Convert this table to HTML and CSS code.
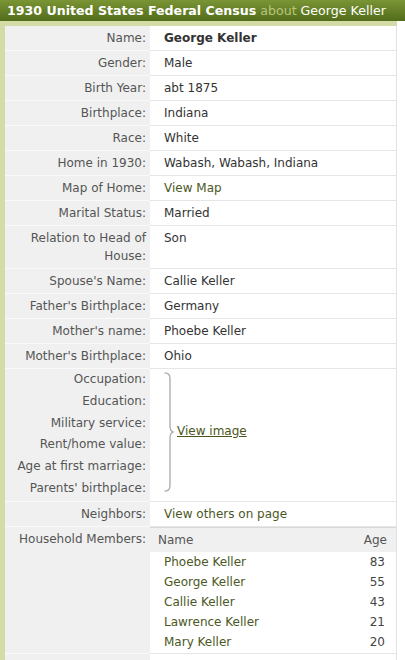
FILE: index.html
```html
<!DOCTYPE html>
<html lang="en">
<head>
<meta charset="utf-8">
<title>1930 United States Federal Census about George Keller</title>
<link rel="stylesheet" href="styles.css">
</head>
<body>
<h1 class="title"><b>1930 United States Federal Census</b> <span class="about">about</span> George Keller</h1>
<div class="frame">
  <table class="rec">
    <colgroup><col class="c-label"><col class="c-value"></colgroup>
    <tbody>
      <tr><td class="l">Name:</td><td class="v"><strong>George Keller</strong></td></tr>
      <tr><td class="l">Gender:</td><td class="v">Male</td></tr>
      <tr><td class="l">Birth Year:</td><td class="v">abt 1875</td></tr>
      <tr><td class="l">Birthplace:</td><td class="v">Indiana</td></tr>
      <tr><td class="l">Race:</td><td class="v">White</td></tr>
      <tr><td class="l">Home in 1930:</td><td class="v">Wabash, Wabash, Indiana</td></tr>
      <tr><td class="l">Map of Home:</td><td class="v"><a class="lnk" href="#">View Map</a></td></tr>
      <tr><td class="l">Marital Status:</td><td class="v">Married</td></tr>
      <tr><td class="l">Relation to Head of House:</td><td class="v">Son</td></tr>
      <tr><td class="l">Spouse's Name:</td><td class="v">Callie Keller</td></tr>
      <tr><td class="l">Father's Birthplace:</td><td class="v">Germany</td></tr>
      <tr><td class="l">Mother's name:</td><td class="v">Phoebe Keller</td></tr>
      <tr><td class="l">Mother's Birthplace:</td><td class="v">Ohio</td></tr>
      <tr>
        <td class="l multi">Occupation:<br>Education:<br>Military service:<br>Rent/home value:<br>Age at first marriage:<br>Parents' birthplace:</td>
        <td class="v img-cell">
          <div class="brace-wrap">
            <svg class="brace" width="10" height="120" viewBox="0 0 10 120" aria-hidden="true">
              <path d="M0.5 0.8 Q6 0.8 6 6.5 L6 54 Q6 59 9.2 60 Q6 61 6 66 L6 113.5 Q6 119.2 0.5 119.2" fill="none" stroke="#a9a9a9" stroke-width="1.3"/>
            </svg>
            <a class="view-image" href="#">View image</a>
          </div>
        </td>
      </tr>
      <tr><td class="l">Neighbors:</td><td class="v"><a class="lnk" href="#">View others on page</a></td></tr>
      <tr>
        <td class="l">Household Members:</td>
        <td class="v hh">
          <table class="members">
            <thead><tr><th class="mn">Name</th><th class="ma">Age</th></tr></thead>
            <tbody>
              <tr><td class="mn"><a class="lnk" href="#">Phoebe Keller</a></td><td class="ma">83</td></tr>
              <tr><td class="mn"><a class="lnk" href="#">George Keller</a></td><td class="ma">55</td></tr>
              <tr><td class="mn"><a class="lnk" href="#">Callie Keller</a></td><td class="ma">43</td></tr>
              <tr><td class="mn"><a class="lnk" href="#">Lawrence Keller</a></td><td class="ma">21</td></tr>
              <tr><td class="mn"><a class="lnk" href="#">Mary Keller</a></td><td class="ma">20</td></tr>
            </tbody>
          </table>
        </td>
      </tr>
      <tr class="spacer"><td class="l"></td><td class="v"></td></tr>
    </tbody>
  </table>
</div>
</body>
</html>
```

FILE: styles.css
```css
html, body {
  margin: 0;
  padding: 0;
  background: #ffffff;
}
body {
  font-family: "DejaVu Sans", Verdana, sans-serif;
  font-size: 12px;
  color: #333333;
}
.title {
  margin: 0;
  height: 21px;
  line-height: 21px;
  padding-left: 7px;
  background: linear-gradient(#7a9534, #526c1a);
  color: #ffffff;
  font-size: 12.6px;
  font-weight: normal;
  white-space: nowrap;
  overflow: hidden;
}
.title b {
  font-weight: bold;
}
.about {
  color: #b7c57a;
}
.frame {
  width: 392px;
  background: #d4dba7;
  padding: 5px 0 0 5px;
}
.rec {
  width: 100%;
  table-layout: fixed;
  border-collapse: collapse;
  background: #ffffff;
  border-right: 1px solid #e2e2e2;
}
.c-label {
  width: 145px;
}
.l {
  background: #f0f0f0;
  color: #555555;
  text-align: right;
  vertical-align: top;
  padding: 3px 4px 3px 0;
  line-height: 18px;
  border-bottom: 1px solid #fafafa;
}
.v {
  vertical-align: top;
  padding: 3px 6px 3px 14px;
  line-height: 18px;
  border-bottom: 1px solid #e6e6e6;
}
.v strong {
  font-weight: bold;
  color: #333333;
}
.lnk {
  color: #4b5824;
  text-decoration: none;
}
.l.multi {
  line-height: 21.8px;
  padding-top: 0;
  padding-bottom: 1px;
}
.img-cell {
  vertical-align: middle;
  padding-top: 0;
  padding-bottom: 6px;
}
.brace-wrap {
  display: flex;
  align-items: center;
}
.brace {
  display: block;
  flex: none;
}
.view-image {
  color: #4a5520;
  text-decoration: underline;
  margin-left: 3px;
  margin-top: -2px;
}
.hh {
  padding: 0 0 1px 0;
}
.members {
  width: 100%;
  border-collapse: collapse;
}
.members th {
  background: #f0f0f0;
  border-top: 1px solid #d9d9d9;
  color: #555555;
  font-weight: normal;
  line-height: 18px;
  padding: 3px 9px 3px 8px;
  text-align: left;
}
.members th.ma {
  text-align: right;
}
.members td {
  line-height: 18px;
  padding: 1px 11px 1px 14px;
}
.members td.ma {
  text-align: right;
  color: #444444;
}
.spacer td {
  height: 30px;
  border-bottom: none;
}
```
